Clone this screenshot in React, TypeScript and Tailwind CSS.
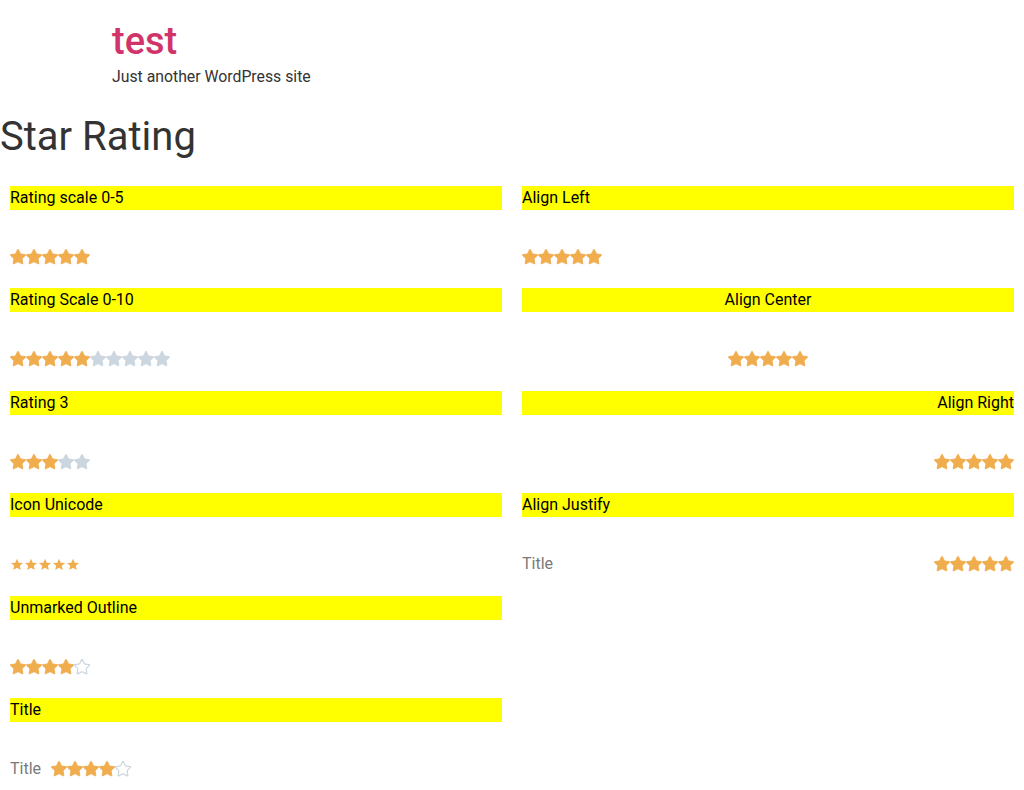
import React from 'react';

const STAR =
  'M11.525 2.295a.53.53 0 0 1 .95 0l2.31 4.679a2.123 2.123 0 0 0 1.595 1.16l5.166.756a.53.53 0 0 1 .294.904l-3.736 3.638a2.123 2.123 0 0 0-.611 1.878l.882 5.14a.53.53 0 0 1-.771.56l-4.618-2.428a2.122 2.122 0 0 0-1.973 0L6.396 21.01a.53.53 0 0 1-.77-.56l.881-5.139a2.122 2.122 0 0 0-.611-1.879L2.16 9.795a.53.53 0 0 1 .294-.906l5.165-.755a2.122 2.122 0 0 0 1.597-1.16z';

function Star({ kind }: { kind: 'on' | 'off' | 'outline' | 'sharp' }) {
  if (kind === 'sharp') {
    return (
      <svg width="14" height="15" viewBox="0 0 24 24" className="block">
        <path d="M12 2l3 6.8 7.4.6-5.6 4.9 1.7 7.3L12 17.7l-6.5 3.9 1.7-7.3-5.6-4.9 7.4-.6z" fill="#f0ad4e" />
      </svg>
    );
  }
  const color = kind === 'on' ? '#f0ad4e' : '#ccd6df';
  return (
    <svg width="16" height="16" viewBox="1.5 1.5 21 21" className="block">
      <path
        d={STAR}
        fill={kind === 'outline' ? 'none' : color}
        stroke={color}
        strokeWidth={kind === 'outline' ? 1.6 : 1.2}
        strokeLinejoin="round"
      />
    </svg>
  );
}

function Stars({ on, off = 0, outline = 0, sharp = false }: { on: number; off?: number; outline?: number; sharp?: boolean }) {
  return (
    <div className="flex items-center">
      {Array.from({ length: on }).map((_, i) => (
        <Star key={'a' + i} kind={sharp ? 'sharp' : 'on'} />
      ))}
      {Array.from({ length: off }).map((_, i) => (
        <Star key={'b' + i} kind="off" />
      ))}
      {Array.from({ length: outline }).map((_, i) => (
        <Star key={'c' + i} kind="outline" />
      ))}
    </div>
  );
}

function Block({ title, align = 'left', children }: { title: string; align?: 'left' | 'center' | 'right'; children: React.ReactNode }) {
  const text = align === 'center' ? 'text-center' : align === 'right' ? 'text-right' : 'text-left';
  return (
    <div className="h-[102.5px]">
      <div className={`h-6 bg-[#ffff00] text-base leading-6 text-black ${text}`}>{title}</div>
      <div className="mt-[35px] flex h-6 items-center">{children}</div>
    </div>
  );
}

export default function App() {
  return (
    <div className="min-h-screen bg-white text-[#333]" style={{ fontFamily: 'Roboto, "Liberation Sans", sans-serif' }}>
      <header className="pl-[112px] pt-[19px]">
        <div className="text-[38px] font-medium leading-[1.2] text-[#d1346b]">test</div>
        <div className="text-[15.8px] leading-6 text-[#333]">Just another WordPress site</div>
      </header>
      <h1 className="mt-[24px] text-[40px] font-normal leading-[1.2] text-[#333]">Star Rating</h1>
      <div className="mt-[25px] grid grid-cols-2 gap-x-5 px-[10px]">
        <div>
          <Block title="Rating scale 0-5">
            <Stars on={5} />
          </Block>
          <Block title="Rating Scale 0-10">
            <Stars on={5} off={5} />
          </Block>
          <Block title="Rating 3">
            <Stars on={3} off={2} />
          </Block>
          <Block title="Icon Unicode">
            <Stars on={5} sharp />
          </Block>
          <Block title="Unmarked Outline">
            <Stars on={4} outline={1} />
          </Block>
          <Block title="Title">
            <div className="flex items-center gap-[10px]">
              <span className="text-base text-[#7a7a7a]">Title</span>
              <Stars on={4} outline={1} />
            </div>
          </Block>
        </div>
        <div>
          <Block title="Align Left">
            <Stars on={5} />
          </Block>
          <Block title="Align Center" align="center">
            <div className="flex w-full justify-center">
              <Stars on={5} />
            </div>
          </Block>
          <Block title="Align Right" align="right">
            <div className="flex w-full justify-end">
              <Stars on={5} />
            </div>
          </Block>
          <Block title="Align Justify">
            <div className="flex w-full items-center justify-between">
              <span className="text-base text-[#7a7a7a]">Title</span>
              <Stars on={5} />
            </div>
          </Block>
        </div>
      </div>
    </div>
  );
}
